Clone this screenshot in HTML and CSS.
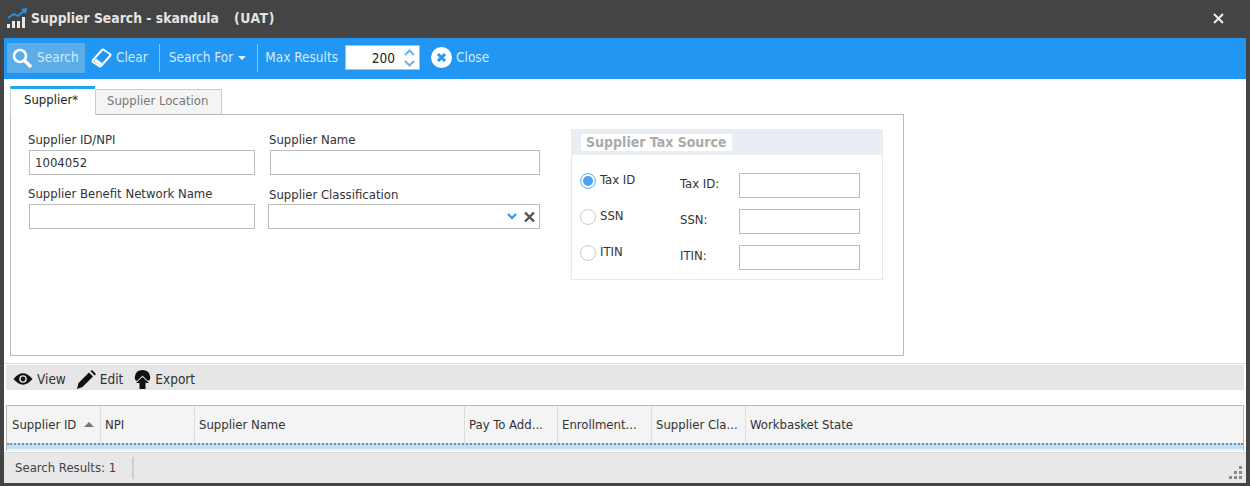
FILE: index.html
```html
<!DOCTYPE html>
<html lang="en">
<head>
    <meta charset="UTF-8">
    <title>Supplier Search</title>
    <link rel="stylesheet" href="styles.css">
</head>
<body>
<div class="window">
    <div class="title-bar">
        <svg class="app-icon" width="22" height="20" viewBox="0 0 22 20">
            <path d="M2 10 L8 6 L12 8 L18 3" fill="none" stroke="#2196f3" stroke-width="1.8"/>
            <path d="M15 1 L21 0 L20 6 Z" fill="#2196f3"/>
            <path d="M1 16h3v4H1zM6 13h3v7H6zM11 13h3v7h-3zM16 9h3v11h-3z" fill="#e8e8e8"/>
        </svg>
        <span class="title-text">Supplier Search - skandula &nbsp; <span class="title-env">(UAT)</span></span>
        <svg class="win-close" width="11" height="11" viewBox="0 0 11 11">
            <path d="M1 1 L10 10 M10 1 L1 10" stroke="#eee" stroke-width="2"/>
        </svg>
    </div>

    <div class="toolbar">
        <div class="tool active">
            <svg width="22" height="22" viewBox="0 0 22 22">
                <circle cx="9" cy="9" r="6" fill="none" stroke="#fff" stroke-width="2.6"/>
                <path d="M13.5 13.5 L20 20" stroke="#fff" stroke-width="3.4"/>
            </svg>
            <span>Search</span>
        </div>
        <div class="tool clear-tool">
            <svg width="21" height="20" viewBox="0 0 21 20">
                <path d="M13 2 L19 6 Q20 7 19 8 L10 18 Q9 19 8 18 L2 14 Q1 13 2 12 L11 2 Q12 1 13 2 Z" fill="none" stroke="#fff" stroke-width="2"/>
                <path d="M3 13 L9 17.5 L11 15 L5 10.5 Z" fill="#fff"/>
            </svg>
            <span>Clear</span>
        </div>
        <div class="tool-sep"></div>
        <div class="tool search-for">
            <span>Search For</span>
            <span class="caret"></span>
        </div>
        <div class="tool-sep"></div>
        <div class="tool">
            <span>Max Results</span>
        </div>
        <div class="spinner">
            <span class="spin-value">200</span>
            <svg width="13" height="20" viewBox="0 0 13 20">
                <path d="M2 7 L6.500 2.500 L11 7 M2 13 L6.500 17.500 L11 13" fill="none" stroke="#64b5f6" stroke-width="2"/>
            </svg>
        </div>
        <div class="tool close-tool">
            <svg width="21" height="21" viewBox="0 0 21 21">
                <circle cx="10.500" cy="10.500" r="10.500" fill="#fff"/>
                <path d="M7 7 L14 14 M14 7 L7 14" stroke="#2196f3" stroke-width="3"/>
            </svg>
            <span>Close</span>
        </div>
    </div>

    <div class="content">
        <div class="tabs">
            <div class="tab selected">Supplier*</div>
            <div class="tab">Supplier Location</div>
        </div>

        <div class="form-box">
            <div class="fields">
                <div class="field col-one">
                    <label>Supplier ID/NPI</label>
                    <div class="input">1004052</div>
                </div>
                <div class="field col-two">
                    <label>Supplier Name</label>
                    <div class="input"></div>
                </div>
                <div class="field col-one">
                    <label>Supplier Benefit Network Name</label>
                    <div class="input"></div>
                </div>
                <div class="field col-three">
                    <label>Supplier Classification</label>
                    <div class="input combo">
                        <svg width="10" height="7" viewBox="0 0 10 7">
                            <path d="M1 1 L5 5 L9 1" fill="none" stroke="#2196f3" stroke-width="2"/>
                        </svg>
                        <svg width="11" height="10" viewBox="0 0 11 10">
                            <path d="M1 0.500 L10 9.500 M10 0.500 L1 9.500" stroke="#555" stroke-width="2.400"/>
                        </svg>
                    </div>
                </div>
            </div>

            <div class="tax-box">
                <div class="tax-head"><span>Supplier Tax Source</span></div>
                <div class="tax-body">
                    <div class="tax-row">
                        <div class="radio checked"></div>
                        <span class="radio-label">Tax ID</span>
                        <span class="tax-label">Tax ID:</span>
                        <div class="input tax-input"></div>
                    </div>
                    <div class="tax-row">
                        <div class="radio"></div>
                        <span class="radio-label">SSN</span>
                        <span class="tax-label">SSN:</span>
                        <div class="input tax-input"></div>
                    </div>
                    <div class="tax-row">
                        <div class="radio"></div>
                        <span class="radio-label">ITIN</span>
                        <span class="tax-label">ITIN:</span>
                        <div class="input tax-input"></div>
                    </div>
                </div>
            </div>
        </div>

        <div class="divider"></div>

        <div class="results-bar">
            <div class="res-tool">
                <svg width="20" height="14" viewBox="0 0 21 14">
                    <path d="M0.500 7 Q10.500 -5 20.500 7 Q10.500 19 0.500 7 Z" fill="#111"/>
                    <circle cx="10.500" cy="7" r="4" fill="#e6e6e6"/>
                    <circle cx="10.500" cy="7" r="2.500" fill="#111"/>
                </svg>
                <span>View</span>
            </div>
            <div class="res-tool">
                <svg width="19" height="19" viewBox="0 0 19 19">
                    <path d="M0 19 L1.500 13 L12 2.500 L16 6.500 L5.500 17 Z M13.500 1 L15 0 L19 4 L17.500 5.500 Z" fill="#111"/>
                </svg>
                <span>Edit</span>
            </div>
            <div class="res-tool">
                <svg width="17" height="19" viewBox="0 0 17 19">
                    <path d="M8.500 0 Q15 0 16 6 Q17 10 14 11 L8.500 5.500 L3 11 Q0 10 1 6 Q2 0 8.500 0 Z" fill="#111"/>
                    <path d="M8.500 7 L15 13 L11.500 13 L11.500 19 L5.500 19 L5.500 13 L2 13 Z" fill="#111"/>
                </svg>
                <span>Export</span>
            </div>
        </div>

        <div class="grid">
            <div class="grid-head">
                <div class="cell narrow first">Supplier ID <span class="sort"></span></div>
                <div class="cell narrow">NPI</div>
                <div class="cell wide">Supplier Name</div>
                <div class="cell pay">Pay To Add...</div>
                <div class="cell narrow">Enrollment...</div>
                <div class="cell narrow">Supplier Cla...</div>
                <div class="cell last">Workbasket State</div>
            </div>
            <div class="grid-row"></div>
        </div>

        <div class="status-bar">
            <span class="status-text">Search Results: 1</span>
            <svg class="grip" width="14" height="14" viewBox="0 0 14 14">
                <path d="M10 1h3v3h-3zM5 6h3v3H5zM10 6h3v3h-3zM0 11h3v3H0zM5 11h3v3H5zM10 11h3v3h-3z" fill="#888"/>
            </svg>
        </div>
    </div>
</div>
</body>
</html>
```

FILE: styles.css
```css
* {
    box-sizing: border-box;
}

body {
    margin: 0;
    width: 1250px;
    height: 486px;
    overflow: hidden;
    font-family: "DejaVu Sans Condensed", "DejaVu Sans", sans-serif;
    font-stretch: condensed;
    font-size: 13px;
    color: #333;
    background: #444;
}

.window {
    height: 486px;
    display: flex;
    flex-direction: column;
    padding: 0 4px 3px;
}

.title-bar {
    height: 38px;
    display: flex;
    align-items: center;
    margin-left: 2px;
    padding-bottom: 2px;
    flex: none;
}

.title-text {
    margin-left: 3px;
    font-size: 13.8px;
    font-weight: 700;
    color: #e4e4e4;
    white-space: pre;
}

.title-env {
    margin-left: 2px;
    letter-spacing: 0.6px;
}

.win-close {
    margin-left: auto;
    margin-right: 22px;
}

.toolbar {
    height: 41px;
    flex: none;
    background: #2196f3;
    display: flex;
    align-items: center;
    padding: 0 0 2px 3px;
    color: #d5ebfc;
    font-size: 13.5px;
}

.tool {
    height: 30px;
    display: flex;
    align-items: center;
    gap: 3px;
    padding: 0 5px;
}

.tool span {
    margin-bottom: 2px;
}

.tool.active {
    width: 78px;
    padding-left: 4px;
    gap: 4px;
    background: #5aade8;
}

.clear-tool {
    padding-left: 6px;
    padding-right: 8px;
    gap: 4px;
}

.search-for {
    padding: 0 8px 0 7px;
}

.tool-sep {
    width: 1px;
    height: 28px;
    margin: 0 2px 0 3px;
    background: #8cc4ee;
}

.tool .caret {
    width: 0;
    height: 0;
    margin: 0 0 0 2px;
    border-left: 4px solid transparent;
    border-right: 4px solid transparent;
    border-top: 4px solid #e8f4fe;
}

.spinner {
    width: 75px;
    height: 25px;
    margin-left: 2px;
    display: flex;
    align-items: center;
    justify-content: flex-end;
    gap: 8px;
    padding-right: 3px;
    background: #fff;
    border: 1px solid #bbb;
    color: #222;
}

.close-tool {
    margin-left: 6px;
    gap: 4px;
}

.content {
    flex: 1;
    background: #fff;
    display: flex;
    flex-direction: column;
    min-height: 0;
}

.tabs {
    display: flex;
    margin: 6px 0 0 6px;
    height: 29px;
    align-items: flex-end;
    flex: none;
}

.tab {
    height: 25px;
    width: 127px;
    padding: 3px 0 0 11px;
    color: #777;
    background: #f4f4f4;
    border: 1px solid #ccc;
    border-bottom: none;
}

.tab.selected {
    width: 85px;
    height: 29px;
    padding: 3px 0 0 13px;
    color: #222;
    background: #fff;
    border: none;
    border-top: 3px solid #1ba7f0;
    border-left: 1px solid #ccc;
    margin-bottom: -1px;
    position: relative;
}

.form-box {
    width: 894px;
    height: 242px;
    margin-left: 6px;
    flex: none;
    border: 1px solid #bbb;
    display: flex;
}

.fields {
    width: 560px;
    height: 120px;
    flex: none;
    display: grid;
    grid-template-columns: 241px 272px;
    grid-template-rows: 54px 54px;
    padding: 17px 0 0 17px;
}

.field label {
    display: block;
    height: 18px;
    line-height: 15px;
    color: #333;
}

.field .input {
    margin-left: 1px;
}

.col-two .input {
    width: 270px;
}

.col-one .input {
    width: 226px;
}

.col-three {
    margin-left: -2px;
}

.col-three .input {
    width: 272px;
}

.col-three label {
    margin-left: 2px;
    padding-top: 1px;
}

.input {
    height: 25px;
    line-height: 24px;
    padding-left: 5px;
    background: #fff;
    border: 1px solid #bbb;
    color: #333;
}

.combo {
    display: flex;
    align-items: center;
    justify-content: flex-end;
    gap: 7px;
    padding-right: 4px;
}

.tax-box {
    width: 312px;
    height: 151px;
    margin: 14px 0 0 0;
    border: 1px solid #e8e8e8;
    flex: none;
}

.tax-head {
    height: 26px;
    background: #e9eef5;
    padding: 5px 0 0 10px;
    margin: -1px -1px 0;
}

.tax-head span {
    display: inline-block;
    height: 17px;
    line-height: 17px;
    padding: 0 5px;
    background: #fff;
    font-size: 14px;
    font-weight: 700;
    color: #aaa;
}

.tax-body {
    padding-top: 18px;
}

.tax-row {
    height: 36px;
    display: flex;
    align-items: flex-start;
    padding-left: 8px;
}

.radio {
    width: 16px;
    height: 16px;
    border-radius: 50%;
    border: 1px solid #ccc;
    background: #fff;
    flex: none;
}

.radio.checked {
    border-color: #64b5f6;
    box-shadow: inset 0 0 0 2px #fff, inset 0 0 0 8px #4da3ef;
}

.radio-label {
    width: 80px;
    margin-left: 4px;
    line-height: 13px;
    color: #333;
}

.tax-label {
    width: 59px;
    line-height: 15px;
    margin-top: 3px;
    color: #333;
}

.tax-input {
    width: 121px;
    flex: none;
}

.divider {
    height: 1px;
    flex: none;
    margin-top: 7px;
    background: #ddd;
}

.results-bar {
    height: 25px;
    flex: none;
    margin: 1px 2px 0;
    background: #e6e6e6;
    display: flex;
    align-items: center;
    gap: 11px;
    padding: 3px 0 0 7px;
    font-size: 13.5px;
}

.res-tool {
    display: flex;
    align-items: center;
    gap: 4px;
}

.grid {
    height: 46px;
    flex: none;
    margin: 15px 2px 0 2px;
    border: 1px solid #bbb;
    border-bottom: none;
    background: #f4f4f4;
}

.grid-head {
    height: 37px;
    display: flex;
}

.cell {
    height: 100%;
    padding: 11px 0 0 4px;
    border-right: 1px solid #ddd;
    color: #333;
    white-space: nowrap;
}

.first {
    padding-left: 5px;
}

.narrow {
    width: 94px;
}

.pay {
    width: 93px;
}

.wide {
    width: 270px;
}

.cell.last {
    border-right: none;
}

.sort {
    display: inline-block;
    width: 0;
    height: 0;
    margin: 0 0 2px 4px;
    border-left: 5px solid transparent;
    border-right: 5px solid transparent;
    border-bottom: 5px solid #777;
}

.grid-row {
    height: 6px;
    background: #bfe0f7;
    border-top: 2px dotted #7a8a99;
}

.status-bar {
    flex: 1;
    margin-top: 1px;
    background: #e8e8e8;
    display: flex;
    align-items: center;
    padding-left: 11px;
    color: #444;
    border-top: 1px solid #ddd;
}

.status-text {
    height: 22px;
    line-height: 22px;
    width: 119px;
    border-right: 2px solid #d0d0d0;
}

.grip {
    margin-left: auto;
    margin-right: 3px;
    align-self: flex-end;
    margin-bottom: 4px;
}
```
